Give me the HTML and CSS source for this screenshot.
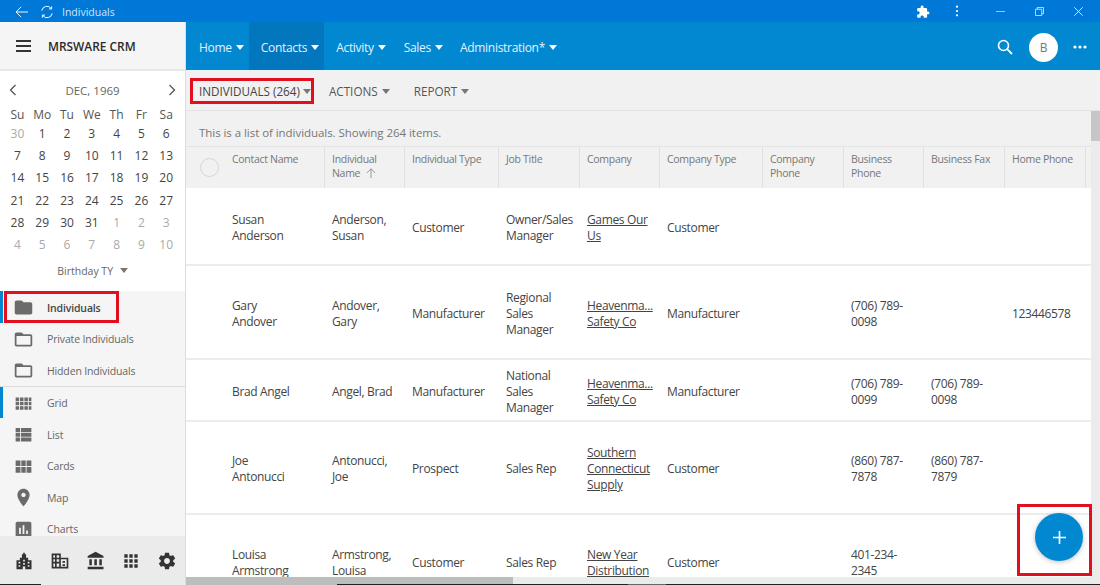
FILE: index.html
```html
<!DOCTYPE html>
<html lang="en">
<head>
<meta charset="utf-8">
<title>Individuals</title>
<link rel="stylesheet" href="styles.css">
</head>
<body>
<header class="titlebar">
  <svg class="tb-back" viewBox="0 0 16 14"><path d="M15 7H1.5M7 1L1 7l6 6" fill="none" stroke="#fff" stroke-width="1.1"/></svg>
  <svg class="tb-refresh" viewBox="0 0 16 16"><path d="M2 6.5A6 6 0 0 1 12.8 4M14 9.5A6 6 0 0 1 3.2 12M13.3 1.5v3h-3M2.7 14.5v-3h3" fill="none" stroke="#fff" stroke-width="1.1"/></svg>
  <span class="tb-title">Individuals</span>
  <span class="tb-space"></span>
  <svg class="tb-ext" viewBox="0 0 24 24"><path fill="#fff" d="M20.5 11H19V7c0-1.1-.9-2-2-2h-4V3.5C13 2.12 11.88 1 10.5 1S8 2.12 8 3.5V5H4c-1.1 0-1.99.9-1.99 2v3.8H3.5c1.49 0 2.7 1.21 2.7 2.7s-1.21 2.7-2.7 2.7H2V20c0 1.1.9 2 2 2h3.8v-1.5c0-1.49 1.21-2.7 2.7-2.7 1.49 0 2.7 1.21 2.7 2.7V22H17c1.1 0 2-.9 2-2v-4h1.5c1.38 0 2.5-1.12 2.5-2.5S21.88 11 20.5 11z"/></svg>
  <svg class="tb-kebab" viewBox="0 0 4 14"><circle cx="2" cy="2" r="1.3" fill="#fff"/><circle cx="2" cy="7" r="1.3" fill="#fff"/><circle cx="2" cy="12" r="1.3" fill="#fff"/></svg>
  <svg class="tb-min" viewBox="0 0 10 10"><path d="M0 5h10" stroke="#a9cff2" stroke-width="1"/></svg>
  <svg class="tb-max" viewBox="0 0 10 10"><path d="M.5 2.5h7v7h-7zM2.5 2.5v-2h7v7h-2" fill="none" stroke="#cfe4f8" stroke-width="1"/></svg>
  <svg class="tb-close" viewBox="0 0 10 10"><path d="M.3.3l9.4 9.4M9.7.3L.3 9.7" stroke="#fff" stroke-width=".9"/></svg>
</header>

<div class="app">
  <aside class="sidebar">
    <div class="brand">
      <span class="burger"><i></i><i></i><i></i></span>
      <span class="brand-name">MRSWARE CRM</span>
    </div>
    <section class="calendar">
      <div class="cal-head">
        <svg class="cal-arrow" viewBox="0 0 8 12"><path d="M6.5 1l-5 5 5 5" fill="none" stroke="#555" stroke-width="1.3"/></svg>
        <span>DEC, 1969</span>
        <svg class="cal-arrow" viewBox="0 0 8 12"><path d="M1.5 1l5 5-5 5" fill="none" stroke="#555" stroke-width="1.3"/></svg>
      </div>
      <div class="cal-grid cal-days"><span>Su</span><span>Mo</span><span>Tu</span><span>We</span><span>Th</span><span>Fr</span><span>Sa</span></div>
      <div class="cal-grid cal-nums">
        <span class="dim">30</span><span>1</span><span>2</span><span>3</span><span>4</span><span>5</span><span>6</span>
        <span>7</span><span>8</span><span>9</span><span>10</span><span>11</span><span>12</span><span>13</span>
        <span>14</span><span>15</span><span>16</span><span>17</span><span>18</span><span>19</span><span>20</span>
        <span>21</span><span>22</span><span>23</span><span>24</span><span>25</span><span>26</span><span>27</span>
        <span>28</span><span>29</span><span>30</span><span>31</span><span class="dim">1</span><span class="dim">2</span><span class="dim">3</span>
        <span class="dim">4</span><span class="dim">5</span><span class="dim">6</span><span class="dim">7</span><span class="dim">8</span><span class="dim">9</span><span class="dim">10</span>
      </div>
      <div class="cal-foot">Birthday TY <i class="caret caret-grey"></i></div>
    </section>
    <nav class="side-list">
      <div class="group">
        <a class="side-item active strong">
          <svg class="ico" viewBox="0 0 24 24"><path d="M10 4H4c-1.1 0-2 .9-2 2v12c0 1.1.9 2 2 2h16c1.1 0 2-.9 2-2V8c0-1.1-.9-2-2-2h-8l-2-2z"/></svg>
          <span>Individuals</span>
        </a>
        <a class="side-item">
          <svg class="ico" viewBox="0 0 24 24"><path d="M20 6h-8l-2-2H4c-1.1 0-1.99.9-1.99 2L2 18c0 1.1.9 2 2 2h16c1.1 0 2-.9 2-2V8c0-1.1-.9-2-2-2zm0 12H4V8h16v10z"/></svg>
          <span>Private Individuals</span>
        </a>
        <a class="side-item">
          <svg class="ico" viewBox="0 0 24 24"><path d="M20 6h-8l-2-2H4c-1.1 0-1.99.9-1.99 2L2 18c0 1.1.9 2 2 2h16c1.1 0 2-.9 2-2V8c0-1.1-.9-2-2-2zm0 12H4V8h16v10z"/></svg>
          <span>Hidden Individuals</span>
        </a>
      </div>
      <div class="group">
        <a class="side-item active">
          <svg class="ico" viewBox="0 0 24 24"><path d="M3 5h4v4H3zM8 5h4v4H8zM13 5h4v4h-4zM18 5h3v4h-3zM3 10h4v4H3zM8 10h4v4H8zM13 10h4v4h-4zM18 10h3v4h-3zM3 15h4v4H3zM8 15h4v4H8zM13 15h4v4h-4zM18 15h3v4h-3z"/></svg>
          <span>Grid</span>
        </a>
        <a class="side-item">
          <svg class="ico" viewBox="0 0 24 24"><path d="M3 4.500h5v4.500H3zM9 4.500h12v4.500H9zM3 10h5v4.500H3zM9 10h12v4.500H9zM3 15.500h5V20H3zM9 15.500h12V20H9z"/></svg>
          <span>List</span>
        </a>
        <a class="side-item">
          <svg class="ico" viewBox="0 0 24 24"><path d="M3 5h5.500v6.500H3zM9.500 5h5v6.500h-5zM15.500 5H21v6.500h-5.500zM3 12.500h5.500V19H3zM9.500 12.500h5V19h-5zM15.500 12.500H21V19h-5.500z"/></svg>
          <span>Cards</span>
        </a>
        <a class="side-item">
          <svg class="ico" viewBox="0 0 24 24"><path d="M12 2C8.13 2 5 5.130 5 9c0 5.250 7 13 7 13s7-7.750 7-13c0-3.870-3.130-7-7-7zm0 9.500c-1.380 0-2.500-1.120-2.500-2.500s1.120-2.500 2.500-2.500 2.500 1.120 2.500 2.500-1.120 2.500-2.500 2.500z"/></svg>
          <span>Map</span>
        </a>
        <a class="side-item">
          <svg class="ico" viewBox="0 0 24 24"><path d="M19 3H5c-1.100 0-2 .9-2 2v14c0 1.100.9 2 2 2h14c1.100 0 2-.9 2-2V5c0-1.100-.9-2-2-2zM9 17H7v-7h2v7zm4 0h-2V7h2v10zm4 0h-2v-4h2v4z"/></svg>
          <span>Charts</span>
        </a>
      </div>
    </nav>
    <footer class="side-foot">
      <svg class="fico" viewBox="0 0 24 24"><path fill-rule="evenodd" d="M11 2h2v2h1.500v4H17v3h4v11H3V11h4V8h2.500V4H11zM5.500 13v2h2v-2zM5.500 17v2h2v-2zM11 10.500v2h2v-2zM11 14.500v2h2v-2zM16.500 13v2h2v-2zM16.500 17v2h2v-2zM10.500 18.500V22h3v-3.500z"/></svg>
      <svg class="fico" viewBox="0 0 24 24"><path fill-rule="evenodd" d="M2 3h11v5h9v13H2zM4 5v3h2V5zM8 5v3h3V5zM4 10v3h2v-3zM8 10v3h3v-3zM4 15v4h2v-4zM8 15v4h3v-4zM13 10v9h7V10zM15 12h3v2h-3zM15 16h3v2h-3z"/></svg>
      <svg class="fico" viewBox="0 0 24 24"><path d="M4 10v7h3v-7H4zm6 0v7h3v-7h-3zM2 22h19v-3H2v3zm14-12v7h3v-7h-3zm-4.500-9L2 6v2h19V6l-9.500-5z"/></svg>
      <svg class="fico" viewBox="0 0 24 24"><path d="M4 4h4v4H4zM10 4h4v4h-4zM16 4h4v4h-4zM4 10h4v4H4zM10 10h4v4h-4zM16 10h4v4h-4zM4 16h4v4H4zM10 16h4v4h-4zM16 16h4v4h-4z"/></svg>
      <svg class="fico" viewBox="0 0 24 24"><path d="M19.430 12.980c.04-.32.07-.64.07-.98s-.03-.66-.07-.98l2.110-1.650c.19-.15.24-.42.12-.64l-2-3.460c-.12-.22-.39-.3-.61-.22l-2.490 1c-.52-.4-1.080-.73-1.690-.98l-.38-2.650C14.460 2.180 14.250 2 14 2h-4c-.25 0-.46.18-.49.42l-.38 2.650c-.61.25-1.170.59-1.690.98l-2.490-1c-.23-.09-.49 0-.61.22l-2 3.460c-.13.22-.07.49.12.64l2.110 1.650c-.04.32-.07.65-.07.98s.03.66.07.98l-2.110 1.650c-.19.15-.24.42-.12.64l2 3.460c.12.22.39.3.61.22l2.490-1c.52.4 1.080.73 1.690.98l.38 2.650c.03.24.24.42.49.42h4c.25 0 .46-.18.49-.42l.38-2.650c.61-.25 1.170-.59 1.690-.98l2.490 1c.23.09.49 0 .61-.22l2-3.460c.12-.22.07-.49-.12-.64l-2.110-1.650zM12 15.500c-1.930 0-3.500-1.570-3.500-3.500s1.570-3.500 3.500-3.500 3.500 1.570 3.500 3.500-1.570 3.500-3.500 3.500z"/></svg>
    </footer>
  </aside>

  <main class="main">
    <nav class="topnav">
      <a class="nav-item">Home<i class="caret"></i></a>
      <a class="nav-item current">Contacts<i class="caret"></i></a>
      <a class="nav-item wide">Activity<i class="caret"></i></a>
      <a class="nav-item">Sales<i class="caret"></i></a>
      <a class="nav-item">Administration*<i class="caret"></i></a>
      <span class="nav-space"></span>
      <svg class="nav-search" viewBox="0 0 16 16"><circle cx="6.500" cy="6.500" r="5" fill="none" stroke="#fff" stroke-width="1.600"/><path d="M10.200 10.200L15 15" stroke="#fff" stroke-width="1.800"/></svg>
      <span class="avatar">B</span>
      <svg class="nav-more" viewBox="0 0 14 4"><circle cx="2" cy="2" r="1.600" fill="#fff"/><circle cx="7" cy="2" r="1.600" fill="#fff"/><circle cx="12" cy="2" r="1.600" fill="#fff"/></svg>
    </nav>
    <div class="toolbar">
      <a class="tool tool-first">INDIVIDUALS (264)<i class="caret caret-grey"></i></a>
      <a class="tool">ACTIONS<i class="caret caret-grey"></i></a>
      <a class="tool">REPORT<i class="caret caret-grey"></i></a>
    </div>
    <div class="content">
      <div class="scroller">
        <p class="info">This is a list of individuals. Showing 264 items.</p>
        <div class="row head">
          <div class="cell first"><span class="check"></span>Contact Name</div>
          <div class="cell">Individual Name <svg class="sort" viewBox="0 0 12 12"><path d="M6 12V1M1 6l5-5 5 5" fill="none" stroke="#888" stroke-width="1"/></svg></div>
          <div class="cell">Individual Type</div>
          <div class="cell">Job Title</div>
          <div class="cell">Company</div>
          <div class="cell">Company Type</div>
          <div class="cell">Company Phone</div>
          <div class="cell">Business Phone</div>
          <div class="cell">Business Fax</div>
          <div class="cell">Home Phone</div>
        </div>
        <div class="row data h78">
          <div class="cell first">Susan Anderson</div><div class="cell">Anderson, Susan</div><div class="cell">Customer</div><div class="cell">Owner/Sales Manager</div><div class="cell"><a class="link">Games Our Us</a></div><div class="cell">Customer</div><div class="cell"></div><div class="cell"></div><div class="cell"></div><div class="cell"></div>
        </div>
        <div class="row data h94">
          <div class="cell first">Gary Andover</div><div class="cell">Andover, Gary</div><div class="cell">Manufacturer</div><div class="cell">Regional Sales Manager</div><div class="cell"><a class="link"><span class="clip">Heavenma...</span>Safety Co</a></div><div class="cell">Manufacturer</div><div class="cell"></div><div class="cell">(706) 789-0098</div><div class="cell"></div><div class="cell">123446578</div>
        </div>
        <div class="row data h62">
          <div class="cell first">Brad Angel</div><div class="cell">Angel, Brad</div><div class="cell">Manufacturer</div><div class="cell">National Sales Manager</div><div class="cell"><a class="link"><span class="clip">Heavenma...</span>Safety Co</a></div><div class="cell">Manufacturer</div><div class="cell"></div><div class="cell">(706) 789-0099</div><div class="cell">(706) 789-0098</div><div class="cell"></div>
        </div>
        <div class="row data h93">
          <div class="cell first">Joe Antonucci</div><div class="cell">Antonucci, Joe</div><div class="cell">Prospect</div><div class="cell">Sales Rep</div><div class="cell"><a class="link">Southern Connecticut Supply</a></div><div class="cell">Customer</div><div class="cell"></div><div class="cell">(860) 787-7878</div><div class="cell">(860) 787-7879</div><div class="cell"></div>
        </div>
        <div class="row data h94">
          <div class="cell first">Louisa Armstrong</div><div class="cell">Armstrong, Louisa</div><div class="cell">Customer</div><div class="cell">Sales Rep</div><div class="cell"><a class="link">New Year Distribution</a></div><div class="cell">Customer</div><div class="cell"></div><div class="cell">401-234-2345</div><div class="cell"></div><div class="cell"></div>
        </div>
      </div>
      <div class="vbar"><span class="vthumb"></span></div>
      <div class="hbar"><span class="hthumb"></span></div>
      <button class="fab" aria-label="Add"><svg viewBox="0 0 12 12"><path d="M6 0v12M0 6h12" stroke="#fff" stroke-width="1.500"/></svg></button>
    </div>
  </main>
</div>

<span class="mark mark-tabs"></span>
<span class="mark mark-folder"></span>
<span class="mark mark-fab"></span>
<span class="edge"></span>
</body>
</html>
```
FILE: styles.css
```css
* { box-sizing: border-box; }
html, body { height: 100%; }
body {
  margin: 0;
  height: 585px;
  width: 1100px;
  overflow: hidden;
  display: flex;
  flex-direction: column;
  position: relative;
  font-family: "Open Sans", "Noto Sans", "Liberation Sans", sans-serif;
  font-size: 12px;
  color: #444;
  background: #fff;
}
svg { display: block; flex: none; }
a { color: inherit; text-decoration: none; }

.titlebar {
  height: 22px;
  flex: none;
  background: #0078d7;
  display: flex;
  align-items: center;
  color: #cfe4f8;
  font-size: 10.5px;
  padding-left: 15px;
}
.tb-back { width: 14px; height: 12px; margin-top: 2px; }
.tb-refresh { width: 14px; height: 14px; margin: 2px 0 0 11px; }
.tb-title { margin: 2px 0 0 8px; }
.tb-space { flex: 1; }
.tb-ext { width: 14px; height: 14px; margin: 2px 25px 0 0; }
.tb-kebab { width: 4px; height: 12px; margin-right: 37px; }
.tb-min { width: 9px; height: 9px; margin-right: 30px; }
.tb-max { width: 9px; height: 9px; margin-right: 30px; }
.tb-close { width: 9px; height: 9px; margin-right: 17px; }

.app { flex: 1; display: flex; min-height: 0; }

.sidebar {
  width: 186px;
  flex: none;
  display: flex;
  flex-direction: column;
  background: #f5f5f5;
  border-right: 1px solid #ddd;
}
.brand {
  height: 49px;
  flex: none;
  display: flex;
  align-items: center;
  padding: 1px 0 0 16px;
  background: #f5f5f5;
  border-bottom: 2px solid #e8e8e8;
}
.burger { width: 15px; display: flex; flex-direction: column; gap: 3px; }
.burger i { height: 2px; background: #333; }
.brand-name { margin-left: 17px; font-size: 11.900px; font-weight: 600; color: #2b2b2b; }

.calendar { height: 220px; flex: none; background: #fff; padding: 0 5px; }
.cal-head {
  height: 36px;
  display: flex;
  align-items: center;
  justify-content: space-between;
  padding: 2px 4px 0 4px;
  color: #666;
  font-size: 11.500px;
}
.cal-arrow { width: 8px; height: 12px; }
.cal-grid { display: grid; grid-template-columns: repeat(7, 24.800px); text-align: center; }
.cal-days { height: 16px; line-height: 15px; color: #555; }
.cal-nums { grid-auto-rows: 22.200px; line-height: 22px; color: #444; }
.dim { color: #aaa; }
.cal-foot { margin-top: 7px; text-align: center; color: #666; font-size: 10.500px; line-height: 16px; }

.caret {
  display: inline-block;
  margin-left: 4px;
  border-left: 4.500px solid transparent;
  border-right: 4.500px solid transparent;
  border-top: 5px solid #fff;
  vertical-align: 2px;
}
.caret-grey { border-top-color: #777; margin-left: 3px; }
.cal-foot .caret { margin-left: 4px; }

.side-list { flex: 1; min-height: 0; overflow: hidden; }
.group + .group { border-top: 1px solid #ddd; }
.side-item {
  height: 31.500px;
  display: flex;
  align-items: center;
  padding: 2px 0 0 13px;
  color: #666;
  font-size: 10.500px;
  letter-spacing: -.15px;
  position: relative;
}
.side-item span { margin-left: 13px; }
.side-item.strong { color: #444; font-weight: 600; }
.side-item.active::before {
  content: "";
  position: absolute;
  left: 0;
  top: 0;
  bottom: 0;
  width: 3px;
  background: #0288d1;
}
.ico { width: 21px; height: 21px; fill: #6b6b6b; }
.side-foot {
  height: 49px;
  flex: none;
  background: #ebebeb;
  display: flex;
  align-items: center;
  justify-content: space-between;
  padding: 1px 8px 0 14px;
}
.fico { width: 20px; height: 20px; fill: #333; }

.main { flex: 1; min-width: 0; display: flex; flex-direction: column; }
.topnav {
  height: 49px;
  flex: none;
  background: #0288d1;
  border-bottom: 1px solid #e8f3fa;
  display: flex;
  align-items: stretch;
  padding-left: 1px;
  color: #e3f2fb;
  font-size: 12px;
  letter-spacing: -.3px;
}
.nav-item { display: flex; align-items: center; padding: 2px 5px 0 12px; height: 48px; }
.nav-item.wide { padding-right: 6px; }
.nav-item.current { background: #0277bd; }
.nav-space { flex: 1; }
.nav-search { width: 16px; height: 16px; align-self: center; margin: 1px 16px 0 0; }
.avatar {
  width: 29px;
  height: 29px;
  border-radius: 50%;
  background: #fff;
  color: #777;
  align-self: center;
  display: flex;
  align-items: center;
  justify-content: center;
  font-size: 12px;
  margin: 2px 15px 0 0;
}
.nav-more { width: 14px; height: 4px; align-self: center; margin: 1px 13px 0 0; }

.toolbar {
  height: 40px;
  flex: none;
  background: #f1f1f1;
  border-bottom: 1px solid #e4e4e4;
  display: flex;
  align-items: center;
  padding: 1px 0 0 13px;
  font-size: 11.700px;
  color: #555;
}
.tool { margin-right: 24px; }
.tool .caret { margin-left: 4px; }
.tool-first { color: #444; margin-right: 18px; }
.tool-first .caret { margin-left: 3px; }

.content { flex: 1; min-height: 0; position: relative; overflow: hidden; background: #fff; }
.scroller { width: 905px; height: 100%; overflow: hidden; }
.info {
  margin: 0;
  height: 35px;
  line-height: 43px;
  padding-left: 13px;
  background: #f1f1f1;
  color: #777;
  font-size: 11.500px;
  letter-spacing: -.05px;
  white-space: nowrap;
}
.row {
  display: grid;
  grid-template-columns: 138px 80px 94px 81px 80px 103px 81px 80px 81px 81px;
  width: 919px;
  letter-spacing: -.35px;
}
.cell { padding: 0 8px; }
.cell.first { padding: 0 27px 0 46px; }
.head {
  height: 42px;
  background: #f1f1f1;
  border-top: 1px solid #e4e4e4;
  color: #777;
  font-size: 10.500px;
  line-height: 14px;
  letter-spacing: -.3px;
}
.head .cell { padding-top: 5px; box-shadow: 1px 0 0 #e0e0e0; position: relative; }
.head .cell.first { padding-right: 8px; }
.check {
  position: absolute;
  left: 14px;
  top: 11px;
  width: 19px;
  height: 19px;
  border: 1px solid #d6d6d6;
  border-radius: 50%;
}
.sort { display: inline-block; width: 10px; height: 10px; margin-left: 3px; vertical-align: -1px; }
.data { border-bottom: 2px solid #ececec; line-height: 16px; color: #444; }
.data .cell { display: flex; align-items: center; padding-top: 3px; }
.data .cell.first { padding-top: 3px; }
.h78 { height: 78px; }
.h94 { height: 94px; }
.h62 { height: 62px; }
.h93 { height: 93px; }
.link { text-decoration: underline; display: block; min-width: 0; width: 100%; }
.clip { display: block; white-space: nowrap; }

.vbar { position: absolute; right: 0; top: 0; bottom: 0; width: 9px; background: #ebebeb; }
.vthumb { display: block; height: 30px; background: #c6c6c6; }
.hbar { position: absolute; left: 0; right: 0; bottom: 0; height: 8px; background: #ebebeb; }
.hthumb { display: block; width: 327px; height: 8px; background: #bdbdbd; }
.fab {
  position: absolute;
  left: 849px;
  top: 402px;
  width: 48px;
  height: 48px;
  border: 0;
  border-radius: 50%;
  background: #0288d1;
  box-shadow: 0 1px 5px rgba(0, 0, 0, .25);
  display: flex;
  align-items: center;
  justify-content: center;
  padding: 0;
}
.fab svg { width: 13px; height: 13px; }

.mark { position: absolute; border: 3px solid #e2101e; pointer-events: none; }
.mark-tabs { left: 190px; top: 78px; width: 124px; height: 26px; }
.mark-folder { left: 4px; top: 291px; width: 115px; height: 32px; }
.mark-fab { left: 1017px; top: 504px; width: 75px; height: 72px; }

.edge {
  position: absolute;
  left: 0;
  right: 0;
  bottom: 0;
  height: 1px;
  background: linear-gradient(to right, #222 41px, transparent 41px, transparent 337px, #222 337px, #222 628px, #666 628px, #666 666px, #222 666px);
}
```
